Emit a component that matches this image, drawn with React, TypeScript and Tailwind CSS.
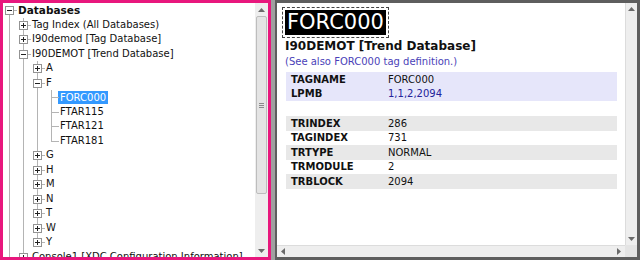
import React from "react";

type Row = {
  label: string;
  depth: number;
  guides: boolean[];
  exp?: "+" | "-";
  last?: boolean;
  first?: boolean;
  bold?: boolean;
  selected?: boolean;
};

const T = true;

const rows: Row[] = [
  { label: "Databases", depth: 0, guides: [], exp: "-", first: true, bold: true },
  { label: "Tag Index (All Databases)", depth: 1, guides: [T], exp: "+" },
  { label: "I90demod [Tag Database]", depth: 1, guides: [T], exp: "+" },
  { label: "I90DEMOT [Trend Database]", depth: 1, guides: [T], exp: "-" },
  { label: "A", depth: 2, guides: [T, T], exp: "+" },
  { label: "F", depth: 2, guides: [T, T], exp: "-" },
  { label: "FORC000", depth: 3, guides: [T, T, T], selected: true },
  { label: "FTAR115", depth: 3, guides: [T, T, T] },
  { label: "FTAR121", depth: 3, guides: [T, T, T] },
  { label: "FTAR181", depth: 3, guides: [T, T, T], last: true },
  { label: "G", depth: 2, guides: [T, T], exp: "+" },
  { label: "H", depth: 2, guides: [T, T], exp: "+" },
  { label: "M", depth: 2, guides: [T, T], exp: "+" },
  { label: "N", depth: 2, guides: [T, T], exp: "+" },
  { label: "T", depth: 2, guides: [T, T], exp: "+" },
  { label: "W", depth: 2, guides: [T, T], exp: "+" },
  { label: "Y", depth: 2, guides: [T, T], exp: "+", last: true },
  { label: "Console1 [XDC Configuration Information]", depth: 1, guides: [T], exp: "+" },
];

// one 14px column of the tree guides
function Guide({ on }: { on: boolean }) {
  return (
    <div className="relative h-full w-[14px] shrink-0">
      {on && <div className="absolute left-[6px] top-0 h-full w-px bg-[#b4b4b4]" />}
    </div>
  );
}

function Node({ row }: { row: Row }) {
  return (
    <div className="relative h-full w-[14px] shrink-0">
      {!row.first && <div className="absolute left-[6px] top-0 h-1/2 w-px bg-[#b4b4b4]" />}
      {!row.last && <div className="absolute left-[6px] top-1/2 h-1/2 w-px bg-[#b4b4b4]" />}
      <div className="absolute left-[6px] top-[7px] h-px w-[8px] bg-[#b4b4b4]" />
      {row.exp && (
        <div className="absolute left-[2px] top-[3px] flex h-[9px] w-[9px] items-center justify-center border border-[#939393] bg-white">
          <div className="relative h-[5px] w-[5px]">
            <div className="absolute left-0 top-[2px] h-px w-[5px] bg-[#222]" />
            {row.exp === "+" && <div className="absolute left-[2px] top-0 h-[5px] w-px bg-[#222]" />}
          </div>
        </div>
      )}
    </div>
  );
}

function Arrow({ dir }: { dir: "up" | "down" | "left" | "right" }) {
  const pts = {
    up: "0,4 3.5,0 7,4",
    down: "0,0 3.5,4 7,0",
    left: "4,0 0,3.5 4,7",
    right: "0,0 4,3.5 0,7",
  }[dir];
  const box = dir === "up" || dir === "down" ? "0 0 7 4" : "0 0 4 7";
  const size = dir === "up" || dir === "down" ? { w: 7, h: 4 } : { w: 4, h: 7 };
  return (
    <svg width={size.w} height={size.h} viewBox={box}>
      <polygon points={pts} fill="#6a6a6a" />
    </svg>
  );
}

const labelRows1 = [
  { k: "TAGNAME", v: "FORC000", blue: false },
  { k: "LPMB", v: "1,1,2,2094", blue: true },
];

const labelRows2 = [
  { k: "TRINDEX", v: "286" },
  { k: "TAGINDEX", v: "731" },
  { k: "TRTYPE", v: "NORMAL" },
  { k: "TRMODULE", v: "2" },
  { k: "TRBLOCK", v: "2094" },
];

export default function App() {
  return (
    <div className="flex h-[260px] w-[640px] overflow-hidden bg-[#a0a0a0] font-['DejaVu_Sans',sans-serif] text-[#111]">
      {/* tree pane */}
      <div className="flex h-full w-[271px] shrink-0 border-[3px] border-[#e8177d] bg-white">
        <div className="flex-1 overflow-hidden">
          {rows.map((r, i) => (
            <div key={i} className="flex h-[14.5px] items-stretch">
              {r.guides.map((g, j) => (
                <Guide key={j} on={g} />
              ))}
              <Node row={r} />
              <div className="flex items-center pl-px">
                {r.selected ? (
                  <span className="-ml-[2px] whitespace-nowrap bg-[#3399ff] px-[2px] text-[10px] leading-[13px] text-white">
                    {r.label}
                  </span>
                ) : (
                  <span className={`whitespace-nowrap leading-[14px] ${r.bold ? "text-[10.5px] font-bold" : "text-[10px]"}`}>
                    {r.label}
                  </span>
                )}
              </div>
            </div>
          ))}
        </div>
        <div className="flex w-[13px] flex-col items-center bg-[#eeeeee]">
          <div className="flex h-[13px] items-center justify-center">
            <Arrow dir="up" />
          </div>
          <div className="flex h-[178px] w-[11px] flex-col items-center justify-center gap-px rounded-[2px] border border-[#bdbdbd] bg-[#e4e4e4]">
            <div className="h-px w-[5px] bg-[#8a8a8a]" />
            <div className="h-px w-[5px] bg-[#8a8a8a]" />
            <div className="h-px w-[5px] bg-[#8a8a8a]" />
          </div>
          <div className="flex-1" />
          <div className="flex h-[13px] items-center justify-center">
            <Arrow dir="down" />
          </div>
        </div>
      </div>

      {/* detail pane */}
      <div className="flex flex-1 pl-[4px]">
        <div className="flex flex-1 flex-col border-b-[3px] border-l-[2px] border-r-[3px] border-t-[3px] border-[#5e5e5e]">
          <div className="flex min-h-0 flex-1">
            <div className="flex-1 overflow-hidden bg-white pl-[8px] pt-[4px]">
              <div className="-ml-[3px] inline-block border border-dashed border-[#444] p-[2px]">
                <div className="bg-black px-[2px] text-[21px] leading-[25px] text-white">FORC000</div>
              </div>
              <div className="mt-[1px] text-[12px] font-bold leading-[15px]">I90DEMOT [Trend Database]</div>
              <div className="text-[10px] leading-[15px] text-[#4a3fb8]">(See also FORC000 tag definition.)</div>
              <div className="ml-px mt-[3px] w-[331px] bg-[#e6e6fa]">
                {labelRows1.map((r) => (
                  <div key={r.k} className="flex h-[14.5px] items-center text-[10px]">
                    <div className="w-[102px] pl-[5px] font-bold">{r.k}</div>
                    <div className={r.blue ? "text-[#23239a]" : ""}>{r.v}</div>
                  </div>
                ))}
              </div>
              <div className="ml-px mt-[15px] w-[331px]">
                {labelRows2.map((r, i) => (
                  <div
                    key={r.k}
                    className={`flex h-[14.5px] items-center text-[10px] ${i % 2 === 0 ? "bg-[#e8e8e8]" : "bg-white"}`}
                  >
                    <div className="w-[102px] pl-[5px] font-bold">{r.k}</div>
                    <div>{r.v}</div>
                  </div>
                ))}
              </div>
            </div>
            <div className="flex w-[12px] flex-col items-center border-l border-[#dcdcdc] bg-[#eeeeee]">
              <div className="flex h-[12px] items-center justify-center">
                <Arrow dir="up" />
              </div>
              <div className="flex-1" />
              <div className="flex h-[12px] items-center justify-center">
                <Arrow dir="down" />
              </div>
            </div>
          </div>
          <div className="flex h-[12px]">
            <div className="flex flex-1 items-center justify-between border-t border-[#dcdcdc] bg-[#eeeeee] px-[4px]">
              <Arrow dir="left" />
              <Arrow dir="right" />
            </div>
            <div className="w-[12px] bg-[#e4e4e4]" />
          </div>
        </div>
      </div>
    </div>
  );
}
